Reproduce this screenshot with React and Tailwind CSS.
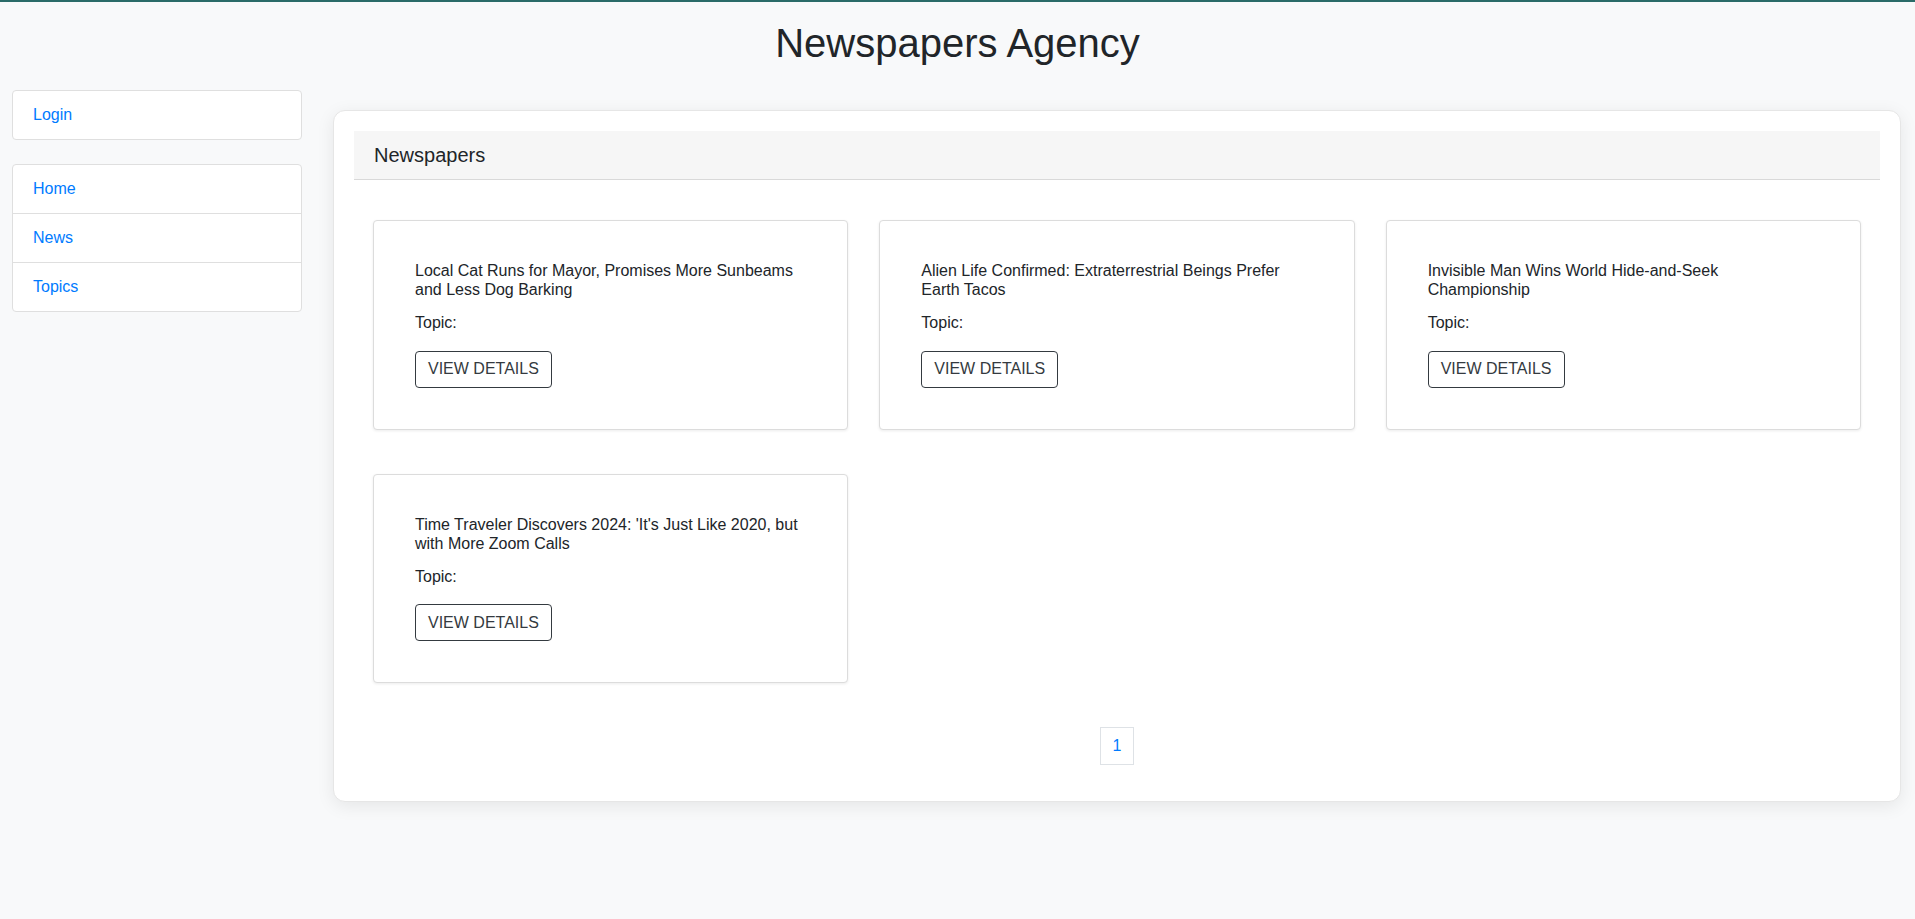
import React from "react";

const news = [
  "Local Cat Runs for Mayor, Promises More Sunbeams and Less Dog Barking",
  "Alien Life Confirmed: Extraterrestrial Beings Prefer Earth Tacos",
  "Invisible Man Wins World Hide-and-Seek Championship",
  "Time Traveler Discovers 2024: 'It's Just Like 2020, but with More Zoom Calls",
];

function Card({ title }) {
  return (
    <div className="bg-white border border-[#dcdcdc] rounded-[4px] shadow-[0_1px_3px_rgba(0,0,0,0.08)] pt-10 pb-[41px] pl-[41px] pr-10">
      <div className="text-[16px] leading-[19.2px] text-[#212529]">{title}</div>
      <div className="mt-[14px] text-[16px] leading-[19.2px] text-[#212529]">Topic:</div>
      <button className="mt-[18px] h-[37px] px-[12px] border border-[#343a40] rounded-[4px] text-[16px] text-[#343a40] bg-white">
        VIEW DETAILS
      </button>
    </div>
  );
}

export default function App() {
  return (
    <div
      className="min-h-screen bg-[#f8f9fa] border-t-2 border-[#2a6b68] text-[#212529]"
      style={{ fontFamily: '"Liberation Sans", Arial, sans-serif' }}
    >
      <h1 className="text-center text-[40px] leading-[48px] pt-[17px] font-normal">Newspapers Agency</h1>
      <div className="flex mt-[23px]">
        <aside className="ml-[12px] w-[290px] shrink-0">
          <div className="bg-white border border-[#dfdfdf] rounded-[4px]">
            <a className="block px-5 py-3 text-[16px] leading-6 text-[#007bff]">Login</a>
          </div>
          <div className="mt-[24px] bg-white border border-[#dfdfdf] rounded-[4px]">
            <a className="block px-5 py-3 text-[16px] leading-6 text-[#007bff] border-b border-[#dfdfdf]">Home</a>
            <a className="block px-5 py-3 text-[16px] leading-6 text-[#007bff] border-b border-[#dfdfdf]">News</a>
            <a className="block px-5 py-3 text-[16px] leading-6 text-[#007bff]">Topics</a>
          </div>
        </aside>
        <main className="ml-[31px] mt-[20px] w-[1568px] shrink-0 bg-white border border-[#e6e6e6] rounded-xl shadow-[0_4px_18px_rgba(0,0,0,0.08)] px-5 pt-5 pb-[36px]">
          <div className="bg-[#f6f6f6] border-b border-[#d9d9d9] h-[49px] px-5 flex items-center">
            <span className="text-[20px]">Newspapers</span>
          </div>
          <div className="grid grid-cols-3 gap-x-[31px] gap-y-[44px] pt-10 px-[19px]">
            {news.map((t) => (
              <Card key={t} title={t} />
            ))}
          </div>
          <div className="flex justify-center mt-[44px]">
            <a className="block px-3 py-[6px] text-[16px] leading-6 text-[#007bff] border border-[#dee2e6] bg-white">1</a>
          </div>
        </main>
      </div>
    </div>
  );
}
